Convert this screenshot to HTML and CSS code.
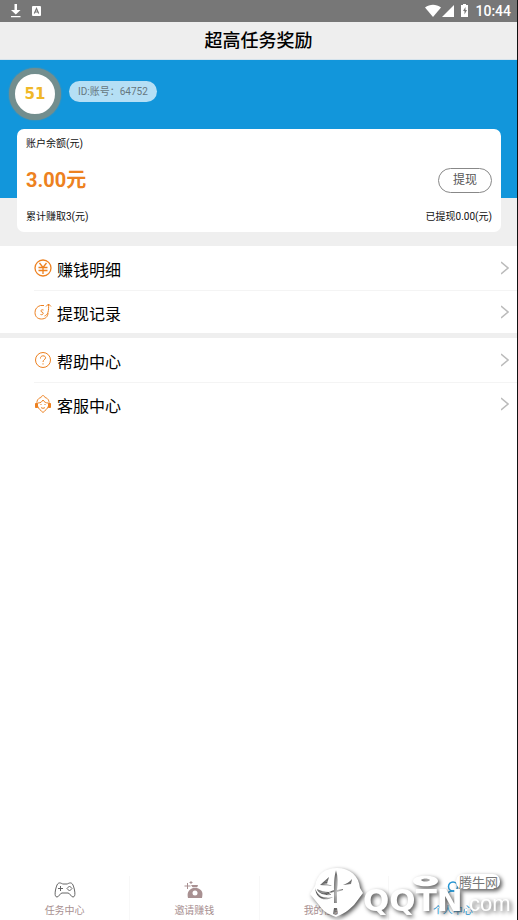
FILE: index.html
```html
<!DOCTYPE html>
<html lang="zh-CN">
<head>
<meta charset="utf-8">
<meta name="viewport" content="width=device-width, initial-scale=1">
<title>超高任务奖励</title>
<link rel="stylesheet" href="styles.css">
</head>
<body>
<div class="status">
  <svg class="status-left" width="34" height="16" viewBox="0 0 34 16" aria-hidden="true">
    <path d="M4.500 1h2.500v6H10.500L5.800 11.500 1 7h3.500zM1 13h9.500v1.300H1z" fill="#fff"/>
    <rect x="22" y="3" width="9" height="10" rx="1" fill="#fff"/>
    <path d="M24.300 10.500l2.200-5 2.200 5M25 9h3" fill="none" stroke="#777" stroke-width="1.200"/>
  </svg>
  <div class="status-right">
    <svg width="46" height="14" viewBox="0 0 46 14" aria-hidden="true">
      <path d="M0 3.500C5-.3 11-.3 16 3.500L8 13z" fill="#fff"/>
      <path d="M29 1v12H17z" fill="#fff"/>
      <path d="M36 1h2V0h3v1h2v12h-7z" fill="#fff"/>
      <path d="M40.500 3L38 7h1.500v3.500L42 6h-1.500z" fill="#777"/>
    </svg>
    <span>10:44</span>
  </div>
</div>
<header class="title"><h1>超高任务奖励</h1></header>
<main>
  <section class="hero">
    <div class="user">
      <div class="avatar">51</div>
      <div class="uid">ID:账号：64752</div>
    </div>
    <div class="card">
      <div class="label">账户余额(元)</div>
      <div class="balance"><strong>3.00元</strong><button type="button">提现</button></div>
      <div class="totals"><span>累计赚取3(元)</span><span>已提现0.00(元)</span></div>
    </div>
  </section>
  <nav class="menu">
    <a href="#detail">
      <svg class="icon" viewBox="0 0 18 18" aria-hidden="true"><circle cx="9" cy="9" r="8"/><path d="M5.500 4L9 8.500 12.500 4M4.500 8.500h9M4.500 11.500h9M9 8.500V15"/></svg>
      <span>赚钱明细</span>
      <svg class="arrow" viewBox="0 0 8 14" aria-hidden="true"><path d="M0 1l7 6-7 6"/></svg>
    </a>
    <a href="#records">
      <svg class="icon thin" viewBox="0 0 18 18" aria-hidden="true"><path d="M10 2.500H6.500C3 3.500 1 6 1 9.500c0 4 2.500 6.500 6.500 6.500 4 0 6.500-2.500 6.500-6M10.500 13c3.500-1 4.500-5 4-12M12 3.500L14.500 1 17 3.500M9.500 7C7 6 6 8.500 8 9s1.500 3.500-1.500 2.500"/></svg>
      <span>提现记录</span>
      <svg class="arrow" viewBox="0 0 8 14" aria-hidden="true"><path d="M0 1l7 6-7 6"/></svg>
    </a>
  </nav>
  <nav class="menu">
    <a href="#help">
      <svg class="icon thin" viewBox="0 0 18 18" aria-hidden="true"><circle cx="9" cy="9" r="7.500"/><path d="M6.500 7.500C6 4 12 4 11.500 7 11.200 9 9 8.500 9 11M9 12.300v1.200"/></svg>
      <span>帮助中心</span>
      <svg class="arrow" viewBox="0 0 8 14" aria-hidden="true"><path d="M0 1l7 6-7 6"/></svg>
    </a>
    <a href="#service">
      <svg class="icon thin" viewBox="0 0 18 18" aria-hidden="true"><path d="M3 9C2.500 4.500 5 3 7 2.500 7.500 0 10.500 0 11 2.500c2 .5 4.500 2 4 6.500M4 8c3 0 4-1.500 5-3 1 2 3 3 5 3M3.500 11c1 3 3.500 4.500 5.500 6.500 2-2 4.500-3.500 5.500-6.500M7 12.500c1 1 3 1 4 0M6.500 9.500h1M10.500 9.500h1"/><path d="M1.500 8.500h2v4h-2zM14.500 8.500h2v4h-2z" fill="#ed8120"/></svg>
      <span>客服中心</span>
      <svg class="arrow" viewBox="0 0 8 14" aria-hidden="true"><path d="M0 1l7 6-7 6"/></svg>
    </a>
  </nav>
</main>
<nav class="tabs">
  <a href="#tasks">
    <svg viewBox="0 0 22 18" aria-hidden="true"><path d="M3 4C5 0 8 3 9 3h4c1 0 4-3 6 1 2 5 3 12 0 12-2 0-3-4-5-4H8c-2 0-3 4-5 4-3 0-2-7 0-12zM6.500 5v5M4 7.500h5M15.500 5l2.500 2.500-2.500 2.500L13 7.500z" fill="none" stroke="#666"/></svg>
    <span>任务中心</span>
  </a>
  <a href="#invite">
    <svg viewBox="0 0 22 18" aria-hidden="true"><path d="M8 4h7l-1 3c6 2 6 5 5 10H5c-1-5 0-8 5-10z" fill="#a89091"/><path d="M8 6.500h7" stroke="#fff" stroke-width=".7"/><circle cx="12" cy="12" r="2.500" fill="#fff"/><path d="M4.500 2v6M1.500 5h6M8 0v3M6.500 1.500h3" stroke="#a89091"/></svg>
    <span>邀请赚钱</span>
  </a>
  <a href="#mine">
    <svg viewBox="0 0 22 18" aria-hidden="true"><circle cx="11" cy="9" r="8" fill="none" stroke="#666"/><path d="M3 7c2 6 9 8 14 3M3 9c3 6 8 7 13 3M4 5c3 5 8 6 13 3" fill="none" stroke="#666"/></svg>
    <span>我的任务</span>
  </a>
  <a href="#me" class="active">
    <svg viewBox="0 0 22 18" aria-hidden="true"><circle cx="11" cy="5.500" r="4.500" fill="none" stroke="#2495d3" stroke-width="1.500"/><path d="M5 15c0-4 3-5 6-5 3 0 5 1 6 4" fill="none" stroke="#2495d3" stroke-width="1.500"/></svg>
    <span>个人中心</span>
  </a>
</nav>
<svg class="watermark" viewBox="0 0 218 60" aria-hidden="true">
  <g class="mark">
    <path fill-rule="evenodd" d="M10 34l5-8C17 14 25 8 37 8c13 0 22 8 23 20l3 5-9 12c-6 6-11 9-18 12-9-3-14-7-17-12zM36 10c-2 8-2 13-2 20l-5 2v1l5-1v11h3V32l6-2v-1l-6 1c1-7 1-13-1-20zM15 28c3 9 10 11 18 9-8 5-17 2-18-9zM17 29c0 3 6 7 14 6l-2-3c-5 0-8-1-12-3zM20 25l9-8-2 7 5 2zM43 25c3-1 7-3 9-6l-1 5zM34 48l-1 6 3 1 2-1-1-6z"/>
    <path fill-rule="evenodd" d="M113 21c0-7 25-7 25 0 0 7-25 7-25 0zM121 20c2 2 7 2 9 0-2-2-7-2-9 0z"/>
    <rect x="156" y="14" width="44" height="15" rx="7"/>
    <text class="brand" x="63" y="51">QQTN</text>
    <text class="domain" x="163" y="51">.com</text>
  </g>
  <text class="site" x="159" y="27">腾牛网</text>
</svg>
</body>
</html>
```
FILE: styles.css
```css
* { box-sizing: border-box; }
body {
  margin: 0;
  min-height: 100vh;
  display: flex;
  flex-direction: column;
  position: relative;
  border-right: 1px solid #111;
  background: #fff;
  color: #111;
  font-family: Roboto, "Noto Sans CJK SC", sans-serif;
}
a { color: inherit; text-decoration: none; }
.status {
  height: 22px;
  padding: 0 6px 0 10px;
  display: flex;
  justify-content: space-between;
  align-items: center;
  background: #777;
  color: #fff;
  font-size: 14px;
  font-weight: 500;
}
.status-right { display: flex; align-items: center; gap: 4px; }
.title {
  height: 38px;
  display: flex;
  align-items: center;
  justify-content: center;
  background: #eee;
  border-bottom: 1px solid #d5e3ec;
}
h1 { margin: 0; font-size: 18px; line-height: 24px; font-weight: 500; color: #000; }
main { flex: 1; }
.hero {
  padding: 8px 16px 14px 17px;
  background: linear-gradient(#1296db 138px, #efefef 138px);
}
.user { display: flex; align-items: flex-start; gap: 8px; margin-left: -8px; }
.avatar {
  width: 52px;
  height: 52px;
  border: 6px solid #738e8e;
  border-radius: 50%;
  background: #fff;
  box-shadow: 0 0 2px #738e8e;
  color: #f0b828;
  font: bold 15px/40px "DejaVu Sans", sans-serif;
  text-align: center;
}
.uid {
  margin-top: 13px;
  padding: 0 9px;
  border-radius: 11px;
  background: #b5dff5;
  color: #667780;
  font-size: 10px;
  line-height: 21px;
}
.card {
  margin-top: 9px;
  padding: 6px 9px 7px;
  border-radius: 7px;
  background: #fff;
  font-size: 10px;
  line-height: 17px;
}
.balance { height: 56px; display: flex; align-items: center; justify-content: space-between; }
.balance strong { font-size: 20px; line-height: 24px; color: #ed8120; }
.balance button {
  width: 54px;
  height: 25px;
  padding: 0;
  border: 1px solid #888;
  border-radius: 13px;
  background: #fff;
  color: #555;
  font: 12px/20px Roboto, "Noto Sans CJK SC", sans-serif;
}
.totals { display: flex; justify-content: space-between; }
.menu + .menu { border-top: 5px solid #efefef; }
.menu a {
  height: 44px;
  margin-left: 34px;
  padding: 0 8px 0 0;
  display: flex;
  align-items: center;
  gap: 5px;
  font-size: 16px;
  line-height: 24px;
  color: #000;
}
.menu a + a { height: 43px; border-top: 1px solid #f4f4f4; }
.menu span { flex: 1; padding-top: 5px; }
.icon { width: 18px; height: 18px; fill: none; stroke: #ed8120; stroke-width: 1.3; }
.thin { stroke-width: 1; }
.arrow { width: 8px; height: 14px; fill: none; stroke: #bbb; stroke-width: 1.5; }
.tabs { display: grid; grid-template-columns: repeat(4, 1fr); height: 44px; }
.tabs a {
  display: flex;
  flex-direction: column;
  align-items: center;
  padding-top: 5px;
  gap: 4px;
  font-size: 10px;
  line-height: 15px;
  color: #a89091;
}
.tabs a + a { border-left: 1px solid #f8f8f8; }
.tabs svg { width: 22px; height: 18px; }
.tabs .active { color: #2495d3; }
.watermark { position: absolute; right: -1px; bottom: 0; width: 218px; height: 60px; pointer-events: none; }
.mark { fill: #fff; filter: drop-shadow(2px 2px 2px #555); }
.brand { font: bold 31px "DejaVu Sans", sans-serif; }
.domain { font: 22px "Liberation Sans", sans-serif; }
.site { font: 13px "Noto Sans CJK SC", sans-serif; fill: #777; }
```
